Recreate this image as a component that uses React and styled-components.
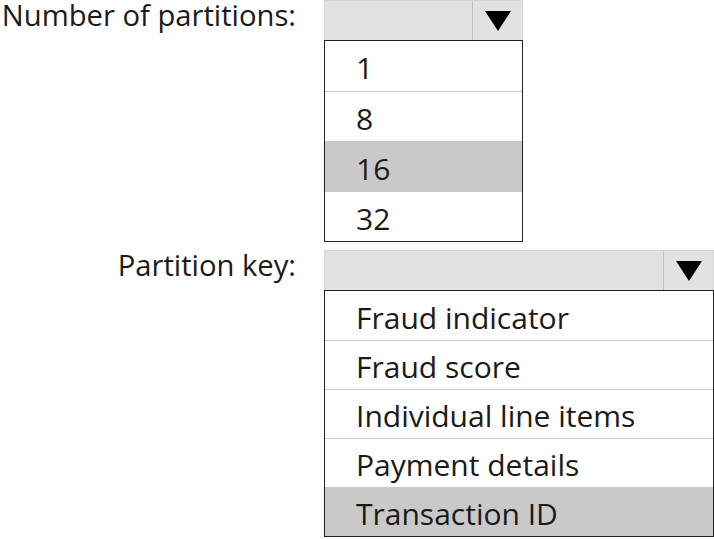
import React from "react";
import styled, { createGlobalStyle } from "styled-components";

const GlobalStyle = createGlobalStyle`
  body {
    margin: 0;
    background: #ffffff;
    font-family: "Open Sans", "Noto Sans", "Liberation Sans", sans-serif;
    color: #1a1a1a;
  }
`;

const Page = styled.div`
  width: 714px;
  height: 539px;
  overflow: hidden;
  display: flex;
  flex-direction: column;
  gap: 8px;
`;

const Field = styled.div`
  display: grid;
  grid-template-columns: 296px auto;
  column-gap: 28px;
  align-items: start;
`;

const Label = styled.div`
  text-align: right;
  font-size: 29.2px;
  line-height: 30px;
  white-space: nowrap;
`;

const Select = styled.div`
  width: ${(p) => p.$width}px;
  display: flex;
  flex-direction: column;
`;

const Combo = styled.div`
  height: 40px;
  box-sizing: border-box;
  background: #e2e2e2;
  border: 1px solid #d6d6d6;
  border-bottom: none;
  display: flex;
  justify-content: flex-end;
`;

const ArrowButton = styled.div`
  width: 49px;
  border-left: 1px solid #c2c2c2;
  display: flex;
  align-items: center;
  justify-content: center;
`;

const List = styled.ul`
  margin: 0;
  padding: 0;
  list-style: none;
  border: 1px solid #222;
  background: #fff;
`;

const Item = styled.li`
  height: ${(p) => p.$height}px;
  box-sizing: border-box;
  padding-left: 31px;
  display: flex;
  align-items: center;
  padding-top: 3px;
  font-size: 30px;
  background: ${(p) => (p.$selected ? "#c9c9c9" : "#fff")};
  & + & {
    border-top: 1px solid #c9c9c9;
  }
`;

function Arrow() {
  return (
    <svg width="28" height="22" viewBox="0 0 28 22">
      <polygon points="1,1 27,1 14,21" fill="#000" />
    </svg>
  );
}

function Dropdown({ width, rowHeight, options, selected }) {
  return (
    <Select $width={width}>
      <Combo>
        <ArrowButton>
          <Arrow />
        </ArrowButton>
      </Combo>
      <List>
        {options.map((o) => (
          <Item key={o} $height={rowHeight} $selected={o === selected}>
            {o}
          </Item>
        ))}
      </List>
    </Select>
  );
}

export default function App() {
  return (
    <Page>
      <GlobalStyle />
      <Field>
        <Label>Number of partitions:</Label>
        <Dropdown
          width={199}
          rowHeight={50}
          options={["1", "8", "16", "32"]}
          selected="16"
        />
      </Field>
      <Field>
        <Label>Partition key:</Label>
        <Dropdown
          width={390}
          rowHeight={49}
          options={[
            "Fraud indicator",
            "Fraud score",
            "Individual line items",
            "Payment details",
            "Transaction ID",
          ]}
          selected="Transaction ID"
        />
      </Field>
    </Page>
  );
}
